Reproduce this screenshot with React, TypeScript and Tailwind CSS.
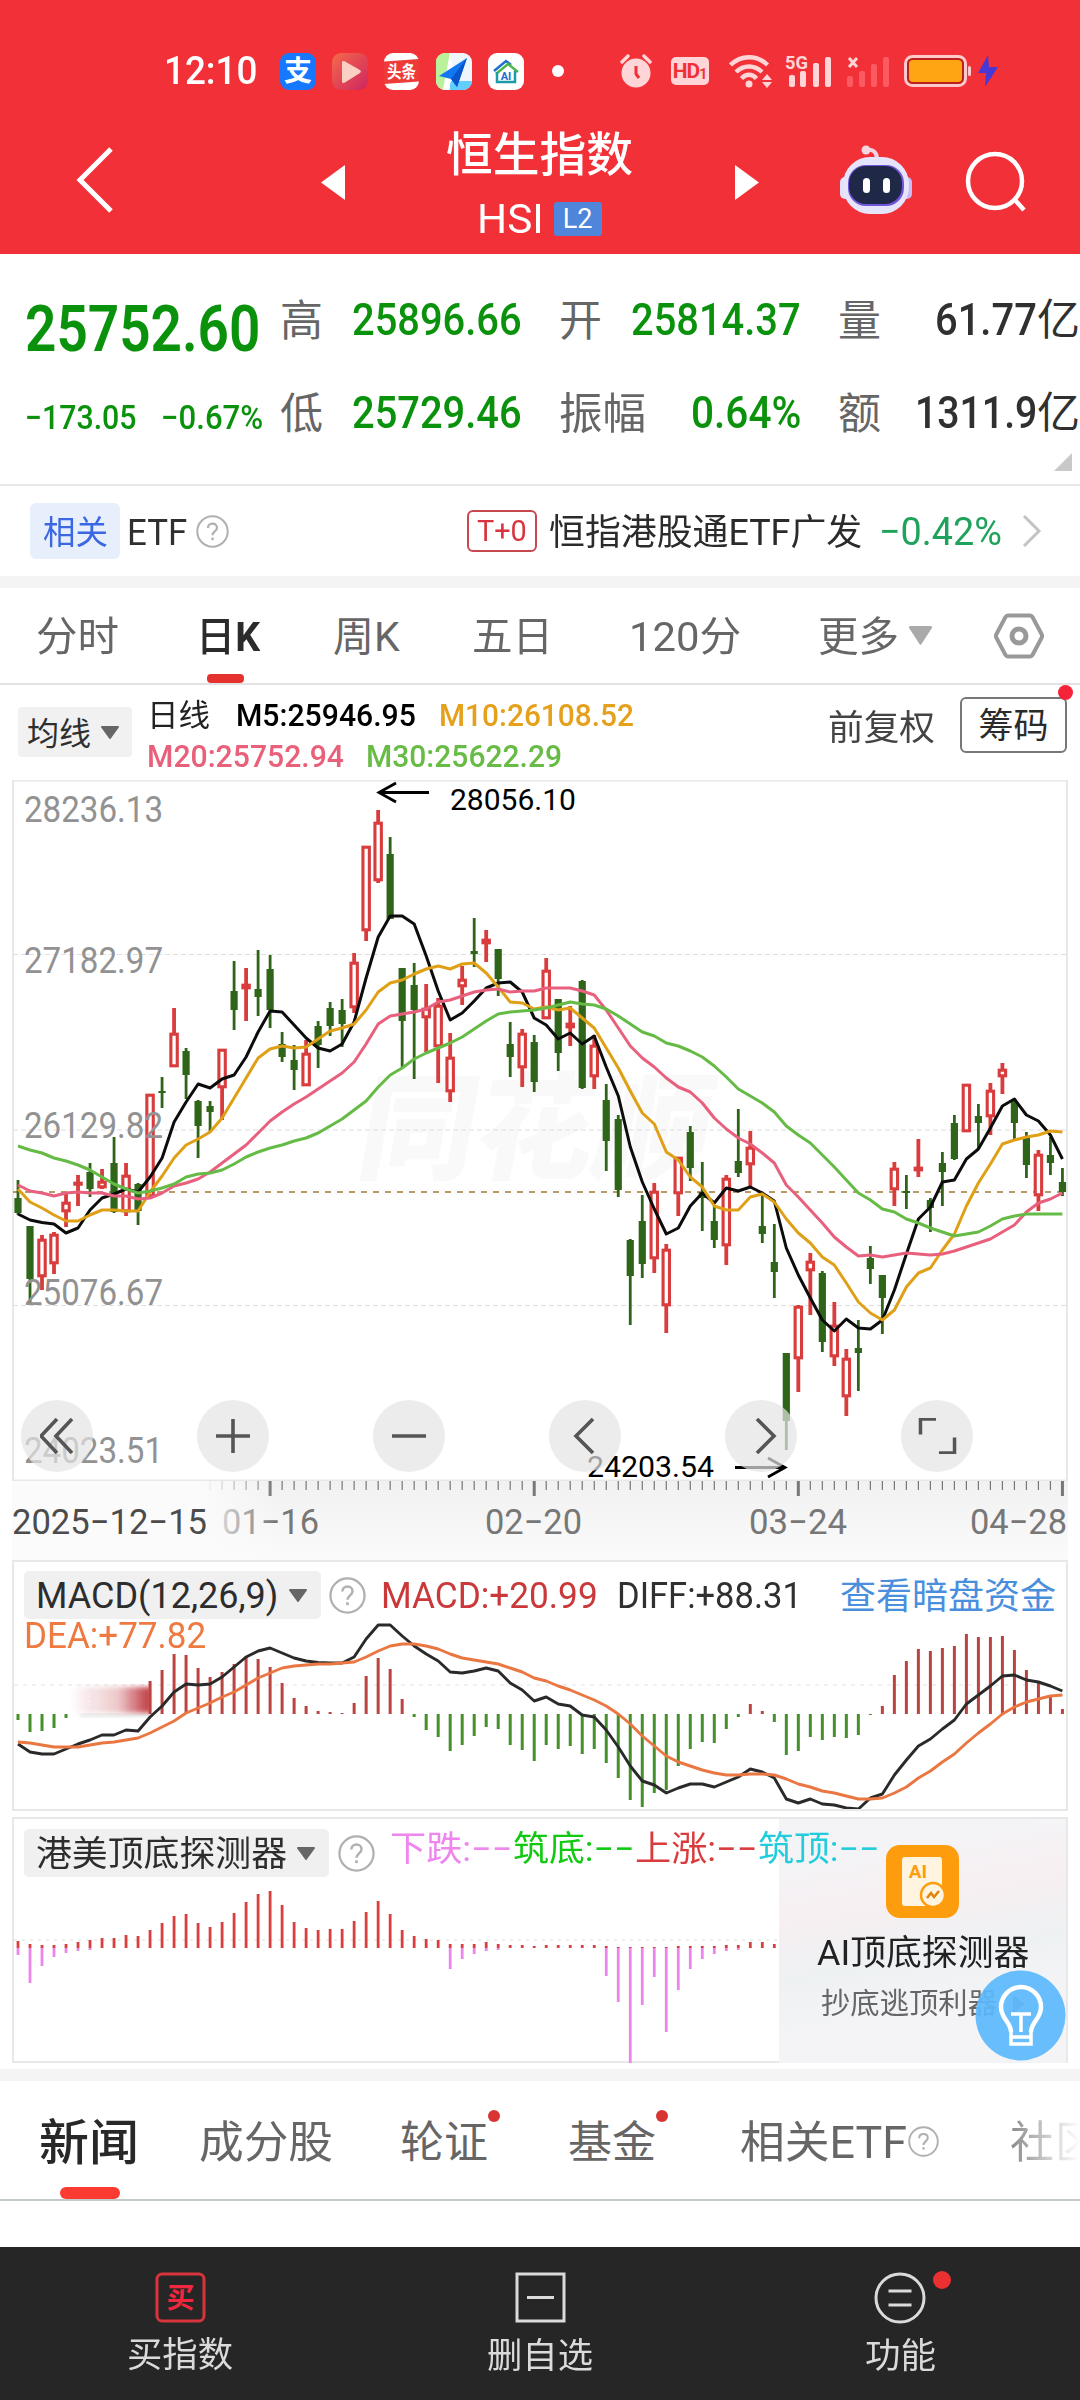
import * as React from "react";

const SANS = "font-[Roboto,'Noto_Sans_CJK_SC',sans-serif]";
const SVG_FONT = "Roboto, 'Noto Sans CJK SC', sans-serif";

const RED = "#d93c3c";
const GREEN = "#2f6518";

// candle: [isUp, high, bodyTop, bodyBottom, low]
type Candle = [number, number, number, number, number];

const CANDLES: Candle[] = [
  [0, 1180, 1198, 1213, 1215], [0, 1226, 1226, 1279, 1305], [1, 1235, 1239, 1277, 1290], [1, 1232, 1234, 1264, 1274],
  [1, 1193, 1202, 1212, 1227], [1, 1175, 1182, 1185, 1206], [0, 1163, 1172, 1189, 1197], [1, 1169, 1181, 1188, 1189],
  [0, 1137, 1163, 1212, 1213], [1, 1163, 1175, 1212, 1216], [0, 1183, 1184, 1211, 1225], [1, 1094, 1094, 1197, 1198],
  [0, 1077, 1091, 1093, 1108], [1, 1008, 1033, 1067, 1067], [0, 1048, 1051, 1075, 1099], [0, 1100, 1101, 1126, 1158],
  [0, 1101, 1106, 1112, 1132], [1, 1049, 1049, 1088, 1120], [0, 961, 991, 1010, 1030], [1, 968, 984, 989, 1021],
  [0, 950, 989, 997, 1016], [0, 955, 969, 1010, 1028], [0, 1032, 1044, 1057, 1062], [0, 1045, 1060, 1070, 1090],
  [1, 1040, 1053, 1086, 1086], [0, 1021, 1026, 1045, 1068], [0, 1002, 1008, 1026, 1036], [0, 999, 1010, 1024, 1047],
  [1, 953, 962, 1008, 1013], [1, 846, 846, 931, 941], [1, 810, 822, 881, 883], [0, 837, 854, 919, 919],
  [0, 968, 968, 1021, 1067], [0, 963, 985, 1010, 1079], [1, 984, 1008, 1018, 1052], [1, 998, 1005, 1047, 1083],
  [1, 1033, 1057, 1092, 1102], [1, 966, 979, 987, 1005], [0, 918, 951, 954, 967], [1, 930, 939, 944, 962],
  [0, 949, 949, 979, 996], [0, 1022, 1044, 1057, 1077], [1, 1029, 1033, 1068, 1087], [0, 1035, 1042, 1082, 1092],
  [1, 958, 970, 1019, 1019], [0, 999, 999, 1053, 1071], [1, 1006, 1023, 1028, 1046], [0, 980, 981, 1088, 1089],
  [1, 1035, 1045, 1077, 1089], [0, 1084, 1100, 1141, 1171], [0, 1115, 1119, 1190, 1197], [0, 1239, 1240, 1276, 1325],
  [0, 1195, 1221, 1264, 1278], [1, 1183, 1191, 1259, 1273], [1, 1244, 1249, 1306, 1333], [1, 1157, 1157, 1194, 1216],
  [0, 1126, 1132, 1168, 1181], [0, 1162, 1192, 1198, 1231], [0, 1205, 1221, 1240, 1248], [1, 1175, 1178, 1246, 1265],
  [0, 1109, 1161, 1173, 1177], [1, 1131, 1147, 1165, 1187], [0, 1195, 1226, 1234, 1243], [0, 1224, 1262, 1272, 1298],
  [0, 1353, 1353, 1421, 1450], [1, 1305, 1306, 1359, 1392], [1, 1253, 1261, 1271, 1315], [0, 1271, 1273, 1342, 1352],
  [1, 1302, 1325, 1357, 1366], [1, 1349, 1358, 1397, 1416], [0, 1320, 1348, 1353, 1391], [0, 1246, 1258, 1269, 1284],
  [0, 1275, 1275, 1298, 1334], [1, 1162, 1168, 1190, 1206], [0, 1175, 1191, 1193, 1209], [1, 1139, 1167, 1171, 1177],
  [0, 1198, 1200, 1208, 1232], [0, 1152, 1163, 1172, 1206], [0, 1115, 1123, 1159, 1160], [1, 1084, 1084, 1132, 1132],
  [0, 1104, 1116, 1123, 1149], [1, 1083, 1090, 1117, 1135], [1, 1063, 1069, 1077, 1094], [0, 1100, 1101, 1123, 1139],
  [0, 1132, 1137, 1165, 1178], [1, 1150, 1154, 1196, 1211], [0, 1137, 1155, 1163, 1175], [0, 1168, 1182, 1192, 1196],
];

const MA5 = [1214, 1220, 1222.5, 1224, 1233, 1228, 1210, 1198, 1194, 1189, 1192, 1177, 1158, 1122, 1102, 1084, 1088, 1079, 1075, 1057, 1032, 1011, 1012, 1025, 1038, 1048, 1051, 1044, 1022, 978, 937, 916, 916, 924, 956, 991, 1020, 1013, 1001, 988, 983, 982, 992, 1018, 1025, 1039, 1033, 1044, 1036, 1067, 1096, 1147, 1182, 1209, 1234, 1228, 1206, 1193, 1203, 1188, 1191, 1187, 1193, 1201, 1248, 1275, 1298, 1320, 1331, 1319, 1328, 1329, 1320, 1290, 1254, 1219, 1207, 1182, 1180, 1159, 1149, 1128, 1106, 1099, 1115, 1121, 1135, 1159];
const MA10 = [1189, 1202, 1208, 1215, 1221, 1221, 1215, 1210, 1210, 1211, 1211, 1192, 1176, 1158, 1145, 1139, 1132, 1118, 1098, 1078, 1058, 1049, 1046, 1048, 1047, 1039, 1031, 1028, 1024, 1010, 992, 983, 980, 974, 969, 966, 969, 964, 963, 973, 987, 1002, 1003, 1009, 1007, 1010, 1008, 1018, 1028, 1048, 1068, 1091, 1113, 1124, 1152, 1160, 1177, 1187, 1206, 1210, 1210, 1197, 1194, 1202, 1219, 1233, 1243, 1257, 1265, 1283, 1302, 1313, 1320, 1310, 1287, 1273, 1268, 1250, 1234, 1206, 1183, 1164, 1144, 1140, 1137, 1135, 1131, 1132];
const MA20 = [1185, 1191, 1193, 1196, 1193, 1192, 1193, 1193, 1196, 1196, 1199, 1198, 1193, 1186, 1183, 1179, 1172, 1163, 1154, 1145, 1133, 1121, 1112, 1104, 1097, 1089, 1081, 1073, 1062, 1044, 1024, 1016, 1014, 1012, 1009, 1002, 1000, 996, 992, 990, 989, 992, 991, 991, 988, 988, 988, 991, 995, 1010, 1028, 1046, 1058, 1067, 1078, 1087, 1092, 1103, 1118, 1129, 1138, 1144, 1153, 1163, 1185, 1197, 1210, 1223, 1237, 1247, 1256, 1255, 1257, 1255, 1253, 1254, 1255, 1254, 1251, 1247, 1243, 1239, 1232, 1225, 1212, 1203, 1199, 1193];
const MA30 = [1146, 1150, 1153, 1158, 1161, 1165, 1170, 1177, 1184, 1189, 1193, 1191, 1188, 1184, 1177, 1174, 1173, 1170, 1164, 1157, 1152, 1148, 1145, 1141, 1138, 1133, 1126, 1119, 1110, 1101, 1087, 1075, 1068, 1059, 1053, 1048, 1043, 1037, 1029, 1021, 1014, 1012, 1011, 1010, 1008, 1005, 1002, 1004, 1005, 1009, 1016, 1024, 1032, 1036, 1043, 1046, 1051, 1057, 1066, 1077, 1089, 1096, 1103, 1112, 1126, 1135, 1143, 1155, 1167, 1180, 1193, 1200, 1209, 1212, 1219, 1223, 1228, 1232, 1236, 1234, 1232, 1226, 1219, 1216, 1214, 1214, 1214, 1214];

const MACD = [6, 18, 17, 14, 4, 0, 0, 0, 0, 0, 0, -33, -44, -60, -59, -46, -37, -42, -50, -58, -55, -47, -31, -16, -8, -3, -2, -1, -11, -38, -56, -45, -15, 3, 16, 23, 37, 31, 22, 13, 15, 31, 36, 47, 31, 35, 32, 40, 35, 49, 64, 86, 93, 79, 76, 52, 35, 28, 29, 15, 3, -10, -3, 8, 41, 37, 23, 26, 23, 24, 21, 1, -8, -39, -53, -65, -63, -66, -68, -80, -77, -77, -78, -64, -44, -31, -17, -5];
const DIF = [1744, 1752, 1754, 1754, 1749, 1744, 1740, 1735, 1735, 1730, 1731, 1717, 1706, 1692, 1684, 1685, 1684, 1677, 1667, 1657, 1651, 1648, 1653, 1658, 1661, 1662.5, 1663, 1663, 1657, 1639, 1625, 1625, 1636, 1646, 1654, 1661, 1672, 1673, 1671, 1668, 1671, 1683, 1690, 1701, 1697, 1704, 1706, 1715, 1717, 1730, 1747, 1766, 1781, 1785, 1793, 1788, 1784, 1784, 1787, 1782, 1777, 1769, 1772, 1778, 1799, 1803, 1799, 1804, 1805, 1808, 1809, 1798, 1794, 1775, 1760, 1746, 1739, 1729, 1720, 1704, 1695, 1686, 1676, 1675, 1680, 1682, 1686, 1691];
const DEA = [1742, 1743, 1745, 1747, 1747, 1747, 1745, 1743, 1742, 1740, 1738, 1733, 1727, 1721, 1713, 1708, 1703, 1697, 1692, 1685, 1678, 1673, 1668, 1666, 1665, 1664, 1664, 1663, 1662, 1657, 1651, 1646, 1644, 1644, 1646, 1649, 1654, 1658, 1660, 1662, 1664, 1668, 1672, 1678, 1681, 1686, 1690, 1695, 1700, 1706, 1714, 1724, 1736, 1746, 1756, 1762, 1766, 1770, 1773, 1775, 1775, 1774, 1774, 1775, 1779, 1784, 1787, 1791, 1793, 1796, 1799, 1799, 1798, 1793, 1787, 1778, 1771, 1762, 1754, 1743, 1733, 1724, 1714, 1707, 1702, 1699, 1696, 1695];

// detector heights above and below the base line, in px
const DET_UP = [7, 4, 3, 3, 4, 6, 8, 10, 10, 13, 12, 18, 25, 32, 34, 25, 21, 26, 35, 46, 54, 57, 43, 26, 20, 18, 19, 19, 27, 36, 47, 34, 18, 12, 9, 8, 4, 4, 4, 6, 4, 3, 3, 2, 3, 3, 3, 3, 3, 2, 1, 1, 1, 1, 1, 2, 2, 2, 2, 3, 3, 6, 6, 4];
const DET_DOWN: Record<number, number> = { 0: 7, 1: 35, 2: 18, 3: 9, 4: 5, 5: 3, 6: 2, 36: 21, 37: 11, 38: 6, 39: 3, 40: 2, 49: 28, 50: 54, 51: 115, 52: 57, 53: 29, 54: 84, 55: 42, 56: 21, 57: 11, 58: 6, 59: 3, 60: 2 };

const cx = (i: number) => 18 + i * 12.005;
const line = (ys: number[]) => ys.map((y, i) => `${cx(i).toFixed(1)},${y}`).join(" ");

// Squeezes a line of text into a fixed width
function Fit({ w, className = "", children }: { w: number; className?: string; children: React.ReactNode }) {
  const ref = React.useRef<HTMLSpanElement>(null);
  const [scale, setScale] = React.useState(1);

  React.useLayoutEffect(() => {
    if (ref.current) setScale(w / ref.current.offsetWidth);
  }, [w]);

  return (
    <span className={`inline-block shrink-0 whitespace-nowrap ${className}`} style={{ width: w }}>
      <span ref={ref} className="inline-block origin-left" style={{ transform: `scaleX(${scale})` }}>
        {children}
      </span>
    </span>
  );
}

function Caret({ className = "", w = 18, h = 13 }: { className?: string; w?: number; h?: number }) {
  return (
    <svg className={`shrink-0 ${className}`} width={w} height={h} viewBox="0 0 18 13" preserveAspectRatio="none" fill="currentColor">
      <path d="M1 0h16a1 1 0 0 1 .8 1.6L9.8 12.4a1 1 0 0 1-1.6 0L.2 1.6A1 1 0 0 1 1 0Z" />
    </svg>
  );
}

function Help({ size, className = "" }: { size: number; className?: string }) {
  return (
    <svg className={`shrink-0 ${className}`} width={size} height={size} viewBox="0 0 36 36" fill="none" stroke="#b0b0b0">
      <circle cx="18" cy="18" r="16.6" strokeWidth="2.2" />
      <path d="M13 14.2c0-2.9 2.1-4.900 5-4.900s4.900 1.900 4.900 4.500c0 4.100-4.900 4.100-4.900 8.400" strokeWidth="2.4" />
      <path d="M18 24.6v2.8" strokeWidth="2.6" />
    </svg>
  );
}

function StatusBar() {
  return (
    <div className="flex h-[142px] items-center pl-[164px] text-white">
      <Fit w={93} className="text-[38px] font-medium leading-none">12:10</Fit>
      <svg className="ml-[23px] shrink-0" width="36" height="37" viewBox="0 0 36 37">
        <rect width="36" height="37" rx="9" fill="#1677ff" />
        <text x="18" y="28" fontSize="28" fontWeight="600" textAnchor="middle" fill="#fff" fontFamily={SVG_FONT}>支</text>
      </svg>
      <svg className="ml-[16px] shrink-0" width="36" height="37" viewBox="0 0 36 37">
        <defs>
          <linearGradient id="play" x1="0" y1="0" x2="1" y2="1">
            <stop offset="0" stopColor="#f5694a" />
            <stop offset="1" stopColor="#cf2560" />
          </linearGradient>
        </defs>
        <rect width="36" height="37" rx="9" fill="url(#play)" />
        <path d="M12 8 28 17a1.800 1.800 0 0 1 0 3L12 30a1.500 1.500 0 0 1-2-1.500V9.500A1.500 1.500 0 0 1 12 8Z" fill="#fbd0c4" />
      </svg>
      <svg className="ml-[16px] shrink-0" width="35" height="37" viewBox="0 0 35 37">
        <rect width="35" height="37" rx="9" fill="#fff" />
        <path d="M0 8.500 35 6v22.500L0 31Z" fill="#ee3a38" />
        <text x="3" y="25" fontSize="17" fontWeight="700" fill="#fff" fontFamily={SVG_FONT} textLength="29" lengthAdjust="spacingAndGlyphs">头条</text>
      </svg>
      <svg className="ml-[17px] shrink-0" width="36" height="37" viewBox="0 0 36 37">
        <clipPath id="nav"><rect width="36" height="37" rx="9" /></clipPath>
        <g clipPath="url(#nav)">
          <rect width="36" height="37" fill="#eef6fb" />
          <path d="M0 0h14L7 37H0Z" fill="#b9f29a" />
          <path d="M14 28h22v9H14Z" fill="#63cdfb" />
          <path d="M14 0 18 20 12 37H7Z" fill="#fff" />
        </g>
        <path d="M31 5 3 23l12 3 6 8Z" fill="#1079f2" />
        <path d="M31 5 15 26l6 8Z" fill="#0a55c9" />
      </svg>
      <svg className="ml-[16px] shrink-0" width="36" height="37" viewBox="0 0 36 37" fill="none">
        <rect width="36" height="37" rx="9" fill="#fff" />
        <path d="M6 18 18 8l5 4" stroke="#1e6fd0" strokeWidth="2.500" />
        <path d="M8 21 20 11l10 8" stroke="#4cb748" strokeWidth="2.500" />
        <path d="M9 19v10h18V18" stroke="#1c9aa6" strokeWidth="2.500" />
        <text x="18" y="27" fontSize="11" fontWeight="700" textAnchor="middle" fill="#1e6fd0" fontFamily={SVG_FONT}>AI</text>
      </svg>
      <span className="ml-[28px] size-[12px] shrink-0 rounded-full bg-white" />
      {/* alarm */}
      <svg className="ml-[56px] shrink-0" width="32" height="34" viewBox="0 0 32 34" fill="#ffd5d7">
        <circle cx="16" cy="19" r="14.500" />
        <path d="M2 8 8 2M30 8l-6-6" stroke="#ffd5d7" strokeWidth="3.500" strokeLinecap="round" />
        <path d="M16 12v8l3 4" fill="none" stroke="#f03037" strokeWidth="3" />
      </svg>
      <span className="ml-[19px] flex h-[28px] w-[38px] shrink-0 items-center justify-center rounded-[5px] bg-[#ffd5d7] text-[#f03037]">
        <span className="text-[21px] font-bold leading-none tracking-tighter">HD</span>
        <span className="mt-[5px] text-[14px] font-bold leading-none">1</span>
      </span>
      {/* wifi */}
      <svg className="ml-[20px] shrink-0" width="43" height="34" viewBox="0 0 43 34" fill="none" stroke="#ffd5d7" strokeWidth="4.500">
        <path d="M1.500 11C12 .5 28 .5 38.500 11" />
        <path d="M7 18c7.500-7.500 18.500-7.500 26 0" />
        <path d="M12.500 24.500c4.500-5 10.500-5 15 0" />
        <circle cx="20" cy="30" r="3.500" fill="#ffd5d7" stroke="none" />
        <path d="M38 20l5 6H33ZM38 34l5-6H33Z" fill="#ffd5d7" stroke="none" />
      </svg>
      <svg className="ml-[13px] shrink-0 overflow-visible" width="48" height="34" viewBox="0 0 48 34" fill="#ffd5d7">
        <text x="0" y="15" fontSize="19" fontWeight="700" fontFamily={SVG_FONT} textLength="23" lengthAdjust="spacingAndGlyphs">5G</text>
        <rect x="4" y="21" width="6" height="12" rx="2" />
        <rect x="15" y="17" width="6" height="16" rx="2" />
        <rect x="28" y="9" width="6" height="24" rx="2" />
        <rect x="40" y="3" width="6" height="30" rx="2" />
      </svg>
      <svg className="ml-[13px] shrink-0" width="46" height="34" viewBox="0 0 46 34" fill="#fb5a60">
        <path d="m3 4 8 9m0-9-8 9" stroke="#ffd5d7" strokeWidth="3" />
        <rect x="1" y="22" width="6" height="11" rx="2" />
        <rect x="13" y="17" width="6" height="16" rx="2" />
        <rect x="25" y="10" width="6" height="23" rx="2" />
        <rect x="37" y="3" width="6" height="30" rx="2" />
      </svg>
      <svg className="ml-[12px] shrink-0" width="68" height="32" viewBox="0 0 68 32">
        <rect x="1.500" y="1.500" width="60" height="29" rx="7" fill="#b8211f" stroke="#ffc9cb" strokeWidth="3" />
        <rect x="5" y="5" width="53" height="22" rx="4" fill="#ffa412" />
        <rect x="64" y="11" width="3" height="10" rx="1.500" fill="#ffc9cb" />
      </svg>
      <svg className="ml-[6px] shrink-0" width="20" height="32" viewBox="0 0 20 32" fill="#4a38d4">
        <path d="M10 0 0 18h8L7 32 20 12h-9Z" />
      </svg>
    </div>
  );
}

function Robot() {
  return (
    <svg className="ml-[80px] shrink-0" width="74" height="70" viewBox="0 0 74 70">
      <path d="M38 14C38 7 34 4 27 5" fill="none" stroke="#f3d3e2" strokeWidth="4" />
      <circle cx="27" cy="5" r="4.500" fill="#f4d5e0" />
      <rect x="1" y="32" width="10" height="22" rx="5" fill="#e5e0fa" />
      <rect x="63" y="32" width="10" height="22" rx="5" fill="#c9baf5" />
      <rect x="4" y="12" width="66" height="57" rx="27" fill="#e6e4fb" />
      <rect x="9" y="20" width="56" height="41" rx="18" fill="#6f55d8" />
      <rect x="10" y="21" width="53" height="38" rx="17" fill="#1f2846" />
      <rect x="24" y="33" width="7" height="15" rx="3.500" fill="#fff" />
      <rect x="44" y="33" width="7" height="15" rx="3.500" fill="#fff" />
    </svg>
  );
}

function Header() {
  return (
    <header className="h-[254px] bg-[#f23037] text-white">
      <StatusBar />
      <div className="flex h-[76px] items-center pl-[76px]">
        <svg className="shrink-0" width="38" height="66" viewBox="0 0 38 66" fill="none" stroke="#fff" strokeWidth="5">
          <path d="M35 2 4 33l31 31" />
        </svg>
        <svg className="ml-[207px] mt-[4px] shrink-0" width="24" height="35" fill="#fff"><path d="M24 0v35L0 17.500Z" /></svg>
        <div className="ml-[99px] flex w-[190px] shrink-0 flex-col items-center pt-[18px]">
          <Fit w={187} className="text-[47px] font-medium leading-[60px]">恒生指数</Fit>
          <div className="flex h-[68px] items-center">
            <Fit w={67} className="text-[41px] leading-none">HSI</Fit>
            <span className="ml-[10px] flex h-[34px] w-[48px] items-center justify-center rounded-[3px] bg-[#4f86d9] text-[27px] leading-none">L2</span>
          </div>
        </div>
        <svg className="ml-[101px] mt-[4px] shrink-0" width="24" height="35" fill="#fff"><path d="M0 0v35l24-17.500Z" /></svg>
        <Robot />
        <svg className="ml-[52px] mt-[3px] shrink-0" width="62" height="61" viewBox="0 0 62 61" fill="none" stroke="#fff" strokeWidth="4.500">
          <circle cx="30" cy="30" r="27" />
          <path d="m50 49 9 10" />
        </svg>
      </div>
    </header>
  );
}

function Stat({ label, lw, value, vw, dark, unit }: { label: string; lw: number; value: string; vw: number; dark?: boolean; unit?: string }) {
  return (
    <div className={`flex items-center justify-between text-[45px] font-medium leading-none ${dark ? "text-[#303030]" : "text-[#0b920d]"}`}>
      <Fit w={lw} className="mt-[3px] text-[43px] font-normal text-[#666]">{label}</Fit>
      <span className="flex items-center">
        <Fit w={vw}>{value}</Fit>
        {unit && <Fit w={43} className="mt-[2px] text-[43px] font-normal">{unit}</Fit>}
      </span>
    </div>
  );
}

function Quote() {
  return (
    <section className="relative flex h-[232px] border-b-2 border-[#e8e8e8] pl-[25px]">
      <div className="w-[255px] shrink-0 text-[#0b920d]">
        <div className="mt-[45px] flex h-[60px] items-center">
          <Fit w={235} className="text-[65px] font-semibold leading-none">25752.60</Fit>
        </div>
        <div className="mt-[33px] flex h-[50px] items-center text-[33px] font-medium leading-none">
          <Fit w={112}>−173.05</Fit>
          <Fit w={102} className="ml-[24px]">−0.67%</Fit>
        </div>
      </div>
      <div className="grid h-[205px] w-[800px] shrink-0 grid-cols-[242px_242px_242px] grid-rows-2 gap-x-[37px] pt-[19px]">
        <Stat label="高" lw={43} value="25896.66" vw={170} />
        <Stat label="开" lw={43} value="25814.37" vw={170} />
        <Stat label="量" lw={43} value="61.77" vw={102} unit="亿" dark />
        <Stat label="低" lw={43} value="25729.46" vw={170} />
        <Stat label="振幅" lw={87} value="0.64%" vw={110} />
        <Stat label="额" lw={43} value="1311.9" vw={122} unit="亿" dark />
      </div>
      <svg className="absolute bottom-[13px] right-[8px]" width="18" height="18" fill="#c8c8c8"><path d="M18 0v18H0Z" /></svg>
    </section>
  );
}

function RelatedEtf() {
  return (
    <section className="flex h-[90px] items-center pl-[30px] leading-none">
      <span className="flex h-[56px] w-[90px] shrink-0 items-center justify-center rounded-[6px] bg-[#e7eefc]">
        <Fit w={65} className="mt-[2px] text-[33px] text-[#3b68e2]">相关</Fit>
      </span>
      <Fit w={60} className="ml-[7px] mt-[3px] text-[36px] text-[#303030]">ETF</Fit>
      <Help size={33} className="ml-[9px]" />
      <span className="ml-[238px] flex h-[42px] w-[70px] shrink-0 items-center justify-center rounded-[6px] border-2 border-[#c9484f]">
        <Fit w={50} className="text-[30px] text-[#d8343f]">T+0</Fit>
      </span>
      <Fit w={313} className="ml-[12px] mt-[3px] text-[36px] text-[#2b2b2b]">恒指港股通ETF广发</Fit>
      <Fit w={123} className="ml-[17px] mt-[3px] text-[39px] text-[#1fa25b]">−0.42%</Fit>
      <svg className="ml-[20px] shrink-0" width="20" height="34" fill="none" stroke="#c4c4c4" strokeWidth="3"><path d="m2 2 15 15L2 32" /></svg>
    </section>
  );
}

function PeriodTabs() {
  return (
    <nav className="flex h-[97px] items-center border-b-2 border-[#e2e2e2] pl-[36px] pt-[4px] text-[41px] leading-none text-[#666]">
      <Fit w={83}>分时</Fit>
      <span className="relative ml-[77px] flex h-full items-center text-[#2b2b2b]">
        <Fit w={64} className="font-medium">日<b>K</b></Fit>
        <span className="absolute bottom-0 left-[11px] h-[9px] w-[37px] rounded-[4px] bg-[#e5322f]" />
      </span>
      <Fit w={67} className="ml-[73px]">周K</Fit>
      <Fit w={81} className="ml-[72px]">五日</Fit>
      <Fit w={112} className="ml-[76px]">120分</Fit>
      <Fit w={81} className="ml-[77px]">更多</Fit>
      <Caret w={23} h={19} className="-mt-[4px] ml-[10px] text-[#aaa]" />
      <svg className="-mt-[4px] ml-[62px] shrink-0" width="50" height="46" viewBox="0 0 50 46" fill="none" stroke="#999" strokeWidth="4">
        <path d="M14 2.500h22a3 3 0 0 1 2.500 1.500l9 17a4 4 0 0 1 0 4l-9 17a3 3 0 0 1-2.500 1.500H14a3 3 0 0 1-2.500-1.500l-9-17a4 4 0 0 1 0-4l9-17A3 3 0 0 1 14 2.500Z" />
        <circle cx="25" cy="23" r="7" strokeWidth="5" />
      </svg>
    </nav>
  );
}

function Legend() {
  return (
    <section className="flex h-[95px] pl-[18px] leading-none">
      <span className="mt-[22px] flex h-[50px] w-[114px] shrink-0 items-center rounded-[4px] bg-[#f1f1f1] pl-[9px] text-[#2f2f2f]">
        <Fit w={64} className="mt-[3px] text-[32px]">均线</Fit>
        <Caret className="ml-[10px] text-[#666]" />
      </span>
      <div className="ml-[15px] w-[680px] shrink-0 text-[32px] font-medium">
        <div className="mt-[10px] flex h-[40px] items-center">
          <Fit w={63} className="text-[31px] font-normal text-[#222]">日线</Fit>
          <Fit w={180} className="ml-[26px] text-black">M5:25946.95</Fit>
          <Fit w={195} className="ml-[23px] text-[#e5a01c]">M10:26108.52</Fit>
        </div>
        <div className="flex h-[41px] items-center">
          <Fit w={197} className="text-[#e9607a]">M20:25752.94</Fit>
          <Fit w={196} className="ml-[22px] text-[#68bb45]">M30:25622.29</Fit>
        </div>
      </div>
      <Fit w={107} className="ml-[1px] mt-[26px] text-[35px] text-[#444]">前复权</Fit>
      <span className="relative ml-[25px] mt-[12px] flex h-[56px] w-[107px] shrink-0 items-center justify-center rounded-[6px] border-2 border-[#777] text-[#2b2b2b]">
        <Fit w={70} className="mt-[2px] text-[35px]">筹码</Fit>
        <span className="absolute -right-[8px] -top-[14px] size-[15px] rounded-full bg-[#f5233a]" />
      </span>
    </section>
  );
}

const PRICE_LABELS: [string, number][] = [["28236.13", 822], ["27182.97", 972.5], ["26129.82", 1138], ["25076.67", 1305], ["24023.51", 1463]];

const TOOLS = ["M17 0 1 17l16 17M32 0 16 17l16 17", "M17 0v34M0 17h34", "M0 17h34", "M25 0 8 17l17 17", "M13 0l17 17-17 17", "M2 16V0h16M37 19v16H21"];

function KLineChart() {
  return (
    <section className="relative h-[701px]">
      <svg className="block" width="1080" height="701" viewBox="0 780 1080 701" fontFamily={SVG_FONT}>
        <rect x="13" y="780.500" width="1054" height="700" fill="#fff" stroke="#e8e8e8" strokeWidth="2" />
        <text x="355" y="1170" fontSize="116" fontWeight="800" fill="#f9f9f9" textLength="352" lengthAdjust="spacingAndGlyphs" transform="translate(205 0) skewX(-10)">同花顺</text>
        {[954.5, 1130, 1305.5].map((y) => (
          <path key={y} d={`M13 ${y}H1067`} stroke="#dedede" strokeWidth="1.200" strokeDasharray="5 3" />
        ))}
        <path d="M13 1192H1067" stroke="#b99a66" strokeWidth="2" strokeDasharray="6 6" />
        {CANDLES.map(([up, hi, top, bottom, lo], i) => {
          const x = cx(i);
          if (!up) {
            return (
              <g key={i} fill={GREEN}>
                <rect x={x - 1.4} y={hi} width="2.800" height={lo - hi} />
                <rect x={x - 3.6} y={top} width="7.200" height={Math.max(bottom - top, 2)} />
              </g>
            );
          }
          return (
            <g key={i} stroke={RED}>
              <path d={`M${x} ${hi}V${top}M${x} ${bottom}V${lo}`} strokeWidth="3.800" />
              <rect x={x - 3.2} y={top + 1.2} width="6.400" height={Math.max(bottom - top - 2.4, 1)} fill="#fff" strokeWidth="3.100" />
            </g>
          );
        })}
        {PRICE_LABELS.map(([label, y]) => (
          <text key={label} x="24" y={y} fontSize="36" fill="#929292" textLength="139" lengthAdjust="spacingAndGlyphs">{label}</text>
        ))}
        <g fill="none" strokeWidth="3" strokeLinejoin="round">
          <polyline points={line(MA5)} stroke="#0c0c0c" />
          <polyline points={line(MA10)} stroke="#dfa017" />
          <polyline points={line(MA20)} stroke="#e8607e" />
          <polyline points={line(MA30)} stroke="#66bb46" />
        </g>
        <g fill="none" stroke="#000" strokeWidth="2.800">
          <path d="M429 792.500H379M396 783l-17 9.500 17 9.500" />
          <path d="M735 1467.500h50M768 1458l17 9.500-17 9.500" />
        </g>
        <text x="450" y="810" fontSize="29.500" textLength="126" lengthAdjust="spacingAndGlyphs">28056.10</text>
        <text x="587" y="1477" fontSize="29.500" textLength="127" lengthAdjust="spacingAndGlyphs">24203.54</text>
      </svg>
      <div className="absolute left-[21px] top-[620px] flex gap-[104px]">
        {TOOLS.map((d, i) => (
          <span key={i} className="flex size-[72px] items-center justify-center rounded-full bg-[#e4e4e4]/70">
            <svg width={i === 5 ? 39 : 34} height="36" viewBox={i === 5 ? "0 -1 39 37" : "0 -1 34 36"} fill="none" stroke="#555" strokeWidth="3.600"><path d={d} /></svg>
          </span>
        ))}
      </div>
    </section>
  );
}

function TimeAxis() {
  return (
    <section className="mx-[12px] h-[79px] bg-linear-to-b from-[#f1f1f1] to-[#fbfbfb]">
      <svg className="block" width="1056" height="79" viewBox="12 1481 1056 79" fontFamily={SVG_FONT} fontSize="35" fill="#777">
        <defs>
          <linearGradient id="fade" gradientUnits="userSpaceOnUse" x1="200" y1="0" x2="275" y2="0">
            <stop offset="0" stopColor="#fbfbfb" />
            <stop offset="1" stopColor="#fbfbfb" stopOpacity="0" />
          </linearGradient>
        </defs>
        {CANDLES.map((_, i) => {
          const major = i % 22 === 21;
          return i > 14 && <rect key={i} x={cx(i) - (major ? 1.5 : 0.6)} y="1481" width={major ? 3 : 1.2} height={major ? 15 : 9} />;
        })}
        <text x="222" y="1534" textLength="97" lengthAdjust="spacingAndGlyphs">01−16</text>
        <rect x="12" y="1481" width="275" height="79" fill="url(#fade)" />
        <text x="12" y="1534" fill="#4c4c4c" textLength="195" lengthAdjust="spacingAndGlyphs">2025−12−15</text>
        <text x="485" y="1534" textLength="97" lengthAdjust="spacingAndGlyphs">02−20</text>
        <text x="749" y="1534" textLength="98" lengthAdjust="spacingAndGlyphs">03−24</text>
        <text x="970" y="1534" textLength="97" lengthAdjust="spacingAndGlyphs">04−28</text>
      </svg>
    </section>
  );
}

function MacdPanel() {
  return (
    <section className="relative mx-[12px] h-[251px] border-2 border-[#e8e8e8]">
      <svg className="absolute left-0 top-0" width="1052" height="247" viewBox="14 1562 1052 247">
        <defs>
          <linearGradient id="smear">
            <stop offset="0" stopColor="#b8242c" stopOpacity="0" />
            <stop offset="0.6" stopColor="#b8242c" stopOpacity="0.25" />
            <stop offset="1" stopColor="#b8242c" stopOpacity="0.9" />
          </linearGradient>
          <filter id="soft"><feGaussianBlur stdDeviation="1.500 2.500" /></filter>
        </defs>
        <path d="M14 1685H1066" stroke="#e3e3e3" strokeDasharray="4 5" />
        <rect x="70" y="1687" width="80" height="26" fill="url(#smear)" filter="url(#soft)" />
        <rect x="80" y="1714" width="68" height="3" fill="#9aa6a6" opacity="0.35" filter="url(#soft)" />
        {MACD.map((h, i) => h !== 0 && (
          <rect key={i} x={cx(i) - 1.5} y={h < 0 ? 1714 + h : 1714} width="3" height={Math.abs(h)} fill={h < 0 ? "#bd4340" : "#45902b"} />
        ))}
        <g fill="none" strokeWidth="2.900" strokeLinejoin="round">
          <polyline points={line(DIF)} stroke="#2a2a2a" />
          <polyline points={line(DEA)} stroke="#ea7642" />
        </g>
      </svg>
      <div className="relative flex h-[48px] translate-y-[9px] items-center pl-[10px] text-[36px] leading-none">
        <span className="flex h-[48px] w-[297px] shrink-0 items-center rounded-[5px] bg-[#f0f0f0] pl-[12px] text-[#2d2d2d]">
          <Fit w={242} className="mt-[2px]">MACD(12,26,9)</Fit>
          <Caret className="ml-[11px] text-[#666]" />
        </span>
        <Help size={37} className="ml-[8px]" />
        <Fit w={217} className="ml-[15px] mt-[2px] text-[#cb383a]">MACD:+20.99</Fit>
        <Fit w={185} className="ml-[19px] mt-[2px] text-[#303030]">DIFF:+88.31</Fit>
        <Fit w={216} className="ml-[38px] mt-[3px] text-[#4a8fdd]">查看暗盘资金</Fit>
      </div>
      <Fit w={182} className="relative ml-[10px] mt-[8px] text-[36px] leading-[36px] text-[#ee7a42]">DEA:+77.82</Fit>
    </section>
  );
}

function DetectorPanel() {
  return (
    <section className="relative mx-[12px] mt-[6px] flex h-[246px] border-2 border-[#e8e8e8]">
      <svg className="absolute left-0 top-0" width="766" height="246" viewBox="14 1819 766 246">
        <path d="M14 1940H780" stroke="#d4e2d4" strokeDasharray="3 5" />
        {DET_UP.map((h, i) => (
          <rect key={i} x={cx(i) - 1.4} y={1948 - h} width="2.800" height={h} fill="#d93f3f" />
        ))}
        {Object.entries(DET_DOWN).map(([i, h]) => (
          <rect key={i} x={cx(Number(i)) - 1.4} y="1948" width="2.800" height={h} fill="#ea86ea" />
        ))}
      </svg>
      <div className="ml-auto flex h-[244px] w-[287px] shrink-0 flex-col items-center bg-[linear-gradient(170deg,#f4f4f6_15%,#f7eff2_35%,#eef1f2_55%,#f4f4f7_75%)] pt-[26px]">
        <svg width="73" height="73" viewBox="0 0 73 73">
          <rect width="73" height="73" rx="14" fill="#fd9d0d" />
          <rect x="16" y="12" width="40" height="49" rx="3" fill="#fff4df" />
          <text x="32" y="33" fontSize="19" fontWeight="700" textAnchor="middle" fill="#fd9d0d" fontFamily={SVG_FONT}>AI</text>
          <circle cx="47" cy="50" r="12" fill="#fff4df" stroke="#fd9d0d" strokeWidth="2.500" />
          <path d="m41 53 4-5 3 4 5-6" fill="none" stroke="#e08409" strokeWidth="2.500" />
        </svg>
        <Fit w={212} className="mt-[18px] text-[35px] leading-[36px] text-[#222]">AI顶底探测器</Fit>
        <div className="mt-[17px] flex w-[211px] items-center pl-[4px] text-[#666]">
          <Fit w={176} className="text-[29px] leading-[30px]">抄底逃顶利器</Fit>
          <svg className="ml-[16px]" width="13" height="18" fill="#888"><path d="M0 0v18l12-9Z" /></svg>
        </div>
      </div>
      <div className="absolute left-[10px] top-[10px] flex h-[48px] items-center text-[35px] leading-none">
        <span className="flex h-[48px] w-[305px] shrink-0 items-center rounded-[5px] bg-[#f0f0f0] pl-[12px] text-[#2d2d2d]">
          <Fit w={251} className="mt-[2px]">港美顶底探测器</Fit>
          <Caret className="ml-[10px] text-[#666]" />
        </span>
        <Help size={37} className="ml-[9px]" />
        <span className="-mt-[8px] ml-[15px] flex">
          <Fit w={123} className="text-[#ee86ee]">下跌:−−</Fit>
          <Fit w={122} className="text-[#12c912]">筑底:−−</Fit>
          <Fit w={123} className="text-[#d83c3c]">上涨:−−</Fit>
          <Fit w={122} className="text-[#22ccdd]">筑顶:−−</Fit>
        </span>
      </div>
      <svg className="absolute right-0 top-[151px]" width="91" height="91" viewBox="0 0 91 91" fill="none" stroke="#fff" strokeWidth="4.500">
        <circle cx="45.500" cy="45.500" r="45" fill="#5cb9fd" fillOpacity="0.93" stroke="none" />
        <path d="M36 62c0-10-10-13-10-25a20 20 0 0 1 40 0c0 12-10 15-10 25" />
        <path d="M36 44h20M46 44v18M36 60v14h20V60M36 67h20" strokeWidth="3.500" />
      </svg>
    </section>
  );
}

function NewsTabs() {
  return (
    <nav className="flex h-[120px] items-center overflow-hidden border-b-2 border-[#c3caca] pl-[39px] pt-[6px] text-[44px] leading-none text-[#666]">
      <span className="relative flex h-full items-center font-medium text-[#282828]">
        <Fit w={100} className="text-[49px]">新闻</Fit>
        <span className="absolute bottom-0 left-[21px] h-[12px] w-[60px] rounded-[6px] bg-[#fb3a31]" />
      </span>
      <Fit w={134} className="ml-[60px]">成分股</Fit>
      <span className="relative ml-[67px]">
        <Fit w={88}>轮证</Fit>
        <span className="absolute -right-[12px] -top-[11px] size-[12px] rounded-full bg-[#d93434]" />
      </span>
      <span className="relative ml-[80px]">
        <Fit w={88}>基金</Fit>
        <span className="absolute -right-[12px] -top-[11px] size-[12px] rounded-full bg-[#d93434]" />
      </span>
      <Fit w={167} className="ml-[84px]">相关ETF</Fit>
      <Help size={31} className="-mt-[4px] ml-[1px]" />
      <span className="ml-[71px] w-[70px] shrink-0 whitespace-nowrap bg-linear-to-r from-[#8a8a8a] via-[#d5d5d5] via-60% to-white bg-clip-text text-[44px] leading-[64px] tracking-[1px] text-transparent">
        社区
      </span>
    </nav>
  );
}

function BottomBar() {
  return (
    <footer className="grid h-[153px] grid-cols-3 bg-[#262626] text-[35px] leading-none text-[#dadada]">
      <div className="flex flex-col items-center pt-[25px]">
        <svg width="51" height="52" viewBox="0 0 51 52">
          <rect x="2" y="2" width="47" height="47" rx="5" fill="none" stroke="#d8343c" strokeWidth="3" />
          <text x="25.500" y="36" fontSize="28" fontWeight="700" textAnchor="middle" fill="#f0283f" fontFamily={SVG_FONT}>买</text>
        </svg>
        <Fit w={106} className="mt-[14px]">买指数</Fit>
      </div>
      <div className="flex flex-col items-center pt-[25px]">
        <svg width="51" height="52" viewBox="0 0 51 52" fill="none" stroke="#dadada" strokeWidth="3">
          <path d="M2 2h47v47H2ZM12 25.500h27" />
        </svg>
        <Fit w={106} className="mt-[15px]">删自选</Fit>
      </div>
      <div className="relative flex flex-col items-center pt-[25px]">
        <svg width="52" height="52" viewBox="0 0 52 52" fill="none" stroke="#dadada" strokeWidth="3">
          <circle cx="26" cy="26" r="24" />
          <path d="M14.500 19h23M14.500 33h23" />
        </svg>
        <Fit w={71} className="mt-[15px]">功能</Fit>
        <span className="absolute left-[213px] top-[24px] size-[18px] rounded-full bg-[#ea3030]" />
      </div>
    </footer>
  );
}

export default function App() {
  return (
    <div className={`h-[2400px] w-[1080px] overflow-hidden bg-white ${SANS}`}>
      <Header />
      <Quote />
      <RelatedEtf />
      <div className="h-[12px] bg-[#f4f4f4]" />
      <PeriodTabs />
      <Legend />
      <KLineChart />
      <TimeAxis />
      <MacdPanel />
      <DetectorPanel />
      <div className="mt-[6px] h-[12px] bg-[#f4f4f4]" />
      <NewsTabs />
      <div className="h-[46px]" />
      <BottomBar />
    </div>
  );
}
